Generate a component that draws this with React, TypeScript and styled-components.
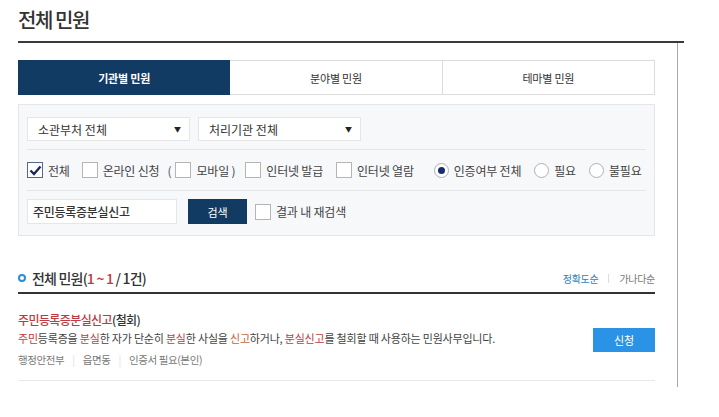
import React, { FC } from 'react';
import styled, { createGlobalStyle } from 'styled-components';

const GlobalStyle = createGlobalStyle`
  body {
    margin: 0;
    background: #fff;
    color: #333;
    font-family: 'Noto Sans CJK KR', 'Noto Sans', sans-serif;
  }
`;

const NAVY = '#123b63';
const RED = '#bf3a3f';

const Page = styled.div`
  padding-left: 18px;
  width: 666px;
`;

const Title = styled.h2`
  border-bottom: 2px solid #3a3a3a;
  font-size: 20px;
  font-weight: 500;
  letter-spacing: -1.4px;
  line-height: 24px;
  margin: 0;
  padding: 8px 0 9px;
`;

const Body = styled.div`
  border-right: 1px solid #a8a8a8;
  padding: 17px 0 6px;
  width: 659px;
`;

const Content = styled.div`
  width: 637px;
`;

const Tabs = styled.div`
  display: grid;
  grid-template-columns: repeat(3, 1fr);
  height: 35px;
`;

const Tab = styled.div<{ $active?: boolean }>`
  align-items: center;
  background: ${(p) => (p.$active ? NAVY : '#fff')};
  border: 1px solid ${(p) => (p.$active ? NAVY : '#dcdcdc')};
  border-left-width: ${(p) => (p.$active ? '1px' : '0')};
  color: ${(p) => (p.$active ? '#fff' : '#333')};
  display: flex;
  font-size: 11px;
  font-weight: ${(p) => (p.$active ? 700 : 400)};
  justify-content: center;
  letter-spacing: -0.2px;
`;

const Filter = styled.div`
  background: #f7f8fa;
  border: 1px solid #e4e6ea;
  margin-top: 9px;
  padding: 0 8px;
`;

const FilterRow = styled.div<{ $pad: string; $divided?: boolean; $h?: number }>`
  align-items: center;
  border-top: ${(p) => (p.$divided ? '1px solid #e4e6ea' : '0')};
  display: flex;
  height: ${(p) => (p.$h ? `${p.$h}px` : 'auto')};
  padding: ${(p) => p.$pad};
`;

const Select = styled.div<{ $w: number }>`
  align-items: center;
  background: #fff;
  border: 1px solid #e6e6e6;
  box-sizing: border-box;
  display: flex;
  font-size: 12px;
  height: 24px;
  justify-content: space-between;
  letter-spacing: 0;
  margin-right: 8px;
  padding: 0 8px 0 10px;
  width: ${(p) => p.$w}px;

  &::after {
    content: '▼';
    font-size: 7px;
    color: #222;
  }
`;

const Box = styled.span<{ $checked?: boolean }>`
  align-items: center;
  background: #fff;
  border: 1px solid ${(p) => (p.$checked ? '#5a6688' : '#b5b5b5')};
  box-sizing: border-box;
  display: inline-flex;
  flex-shrink: 0;
  height: 16px;
  justify-content: center;
  width: 16px;
`;

const Radio = styled.span<{ $checked?: boolean }>`
  align-items: center;
  background: #fff;
  border: 1px solid #b0b0b0;
  border-radius: 50%;
  box-sizing: border-box;
  display: inline-flex;
  flex-shrink: 0;
  height: 15px;
  justify-content: center;
  width: 15px;

  &::after {
    background: #1a2b6e;
    border-radius: 50%;
    content: '';
    display: ${(p) => (p.$checked ? 'block' : 'none')};
    height: 7px;
    width: 7px;
  }
`;

const Option = styled.label<{ $gap?: number }>`
  align-items: center;
  color: #444;
  display: inline-flex;
  font-size: 12px;
  gap: 5px;
  letter-spacing: -0.2px;
  margin-right: ${(p) => p.$gap ?? 13}px;
  white-space: nowrap;
`;

const Paren = styled.span`
  color: #555;
  font-size: 12px;
  margin-right: 4px;
`;

const SearchInput = styled.div`
  align-items: center;
  background: #fff;
  border: 1px solid #e6e6e6;
  box-sizing: border-box;
  display: flex;
  font-size: 12px;
  font-weight: 500;
  height: 25px;
  letter-spacing: -0.3px;
  padding-left: 5px;
  width: 150px;
`;

const SearchButton = styled.button`
  background: ${NAVY};
  border: 0;
  color: #fff;
  font-family: inherit;
  font-size: 11px;
  height: 25px;
  margin: 0 8px 0 11px;
  padding: 0;
  width: 59px;
`;

const ResultHead = styled.div`
  align-items: center;
  border-bottom: 2px solid #333;
  display: flex;
  height: 28px;
  justify-content: space-between;
  margin-top: 28px;
`;

const HeadTitle = styled.h3`
  align-items: center;
  display: flex;
  font-size: 14px;
  font-weight: 500;
  letter-spacing: -0.8px;
  margin: 0;

  &::before {
    border: 2px solid #2a8fd8;
    border-radius: 50%;
    content: '';
    height: 4px;
    margin-right: 6px;
    width: 4px;
  }

  em {
    color: ${RED};
    font-style: normal;
  }
`;

const Sorts = styled.div`
  align-items: center;
  display: flex;
  font-size: 10px;
  letter-spacing: -0.3px;
`;

const Sort = styled.a<{ $active?: boolean }>`
  color: ${(p) => (p.$active ? '#2b7fc0' : '#777')};
  text-decoration: none;
`;

const SortBar = styled.span`
  background: #ddd;
  height: 9px;
  margin: 0 10px;
  width: 1px;
`;

const Item = styled.div`
  align-items: center;
  border-bottom: 1px solid #e8e8e8;
  display: flex;
  justify-content: space-between;
  padding: 17px 0 11px;
`;

const ItemTitle = styled.div`
  color: #333;
  font-size: 12px;
  font-weight: 500;
  letter-spacing: -0.6px;
  line-height: 18px;

  b {
    color: ${RED};
    font-weight: 500;
  }
`;

const Desc = styled.p`
  color: #444;
  font-size: 11px;
  letter-spacing: -0.2px;
  line-height: 18px;
  margin: 0;
`;

const Mark = styled.span<{ $tone?: string }>`
  color: ${(p) => p.$tone ?? RED};
`;

const Meta = styled.div`
  color: #777;
  display: flex;
  font-size: 10.5px;
  letter-spacing: -0.4px;
  line-height: 18px;
  margin-top: 4px;

  span + span::before {
    color: #ddd;
    content: '|';
    margin: 0 8px;
  }
`;

const ApplyButton = styled.button`
  background: #2b93e6;
  border: 0;
  color: #fff;
  font-family: inherit;
  font-size: 11px;
  height: 24px;
  padding: 0;
  width: 62px;
`;

const Check: FC = () => (
  <svg width="13" height="11" viewBox="0 0 13 11">
    <path d="M1.5 5.5 L5 9 L11.5 1.5" fill="none" stroke="#1d2a5e" strokeWidth="2.4" />
  </svg>
);

const App: FC = () => {
  return (
    <Page>
      <GlobalStyle />
      <Title>전체 민원</Title>
      <Body>
        <Content>
          <Tabs>
            <Tab $active>기관별 민원</Tab>
            <Tab>분야별 민원</Tab>
            <Tab>테마별 민원</Tab>
          </Tabs>

          <Filter>
            <FilterRow $pad="12px 0 8px">
              <Select $w={163}>소관부처 전체</Select>
              <Select $w={163}>처리기관 전체</Select>
            </FilterRow>
            <FilterRow $pad="0" $h={40} $divided>
              <Option $gap={12}>
                <Box $checked>
                  <Check />
                </Box>
                전체
              </Option>
              <Option $gap={8}>
                <Box />
                온라인 신청
              </Option>
              <Paren>(</Paren>
              <Option $gap={10}>
                <Box />
                모바일 )
              </Option>
              <Option>
                <Box />
                인터넷 발급
              </Option>
              <Option $gap={20}>
                <Box />
                인터넷 열람
              </Option>
              <Option>
                <Radio $checked />
                인증여부 전체
              </Option>
              <Option>
                <Radio />
                필요
              </Option>
              <Option>
                <Radio />
                불필요
              </Option>
            </FilterRow>
            <FilterRow $pad="8px 0 11px" $divided>
              <SearchInput>주민등록증분실신고</SearchInput>
              <SearchButton>검색</SearchButton>
              <Option>
                <Box />
                결과 내 재검색
              </Option>
            </FilterRow>
          </Filter>

          <ResultHead>
            <HeadTitle>
              전체 민원(<em>1 ~ 1</em>&nbsp;/ 1건)
            </HeadTitle>
            <Sorts>
              <Sort $active>정확도순</Sort>
              <SortBar />
              <Sort>가나다순</Sort>
            </Sorts>
          </ResultHead>

          <Item>
            <div>
              <ItemTitle>
                <b>주민등록증분실신고</b>(철회)
              </ItemTitle>
              <Desc>
                <Mark>주민</Mark>등록증을 <Mark>분실</Mark>한 자가 단순히 <Mark>분실</Mark>한 사실을{' '}
                <Mark $tone="#c4663a">신고</Mark>하거나, <Mark>분실신고</Mark>를 철회할 때 사용하는
                민원사무입니다.
              </Desc>
              <Meta>
                <span>행정안전부</span>
                <span>읍면동</span>
                <span>인증서 필요(본인)</span>
              </Meta>
            </div>
            <ApplyButton>신청</ApplyButton>
          </Item>
        </Content>
      </Body>
    </Page>
  );
};

export default App;
